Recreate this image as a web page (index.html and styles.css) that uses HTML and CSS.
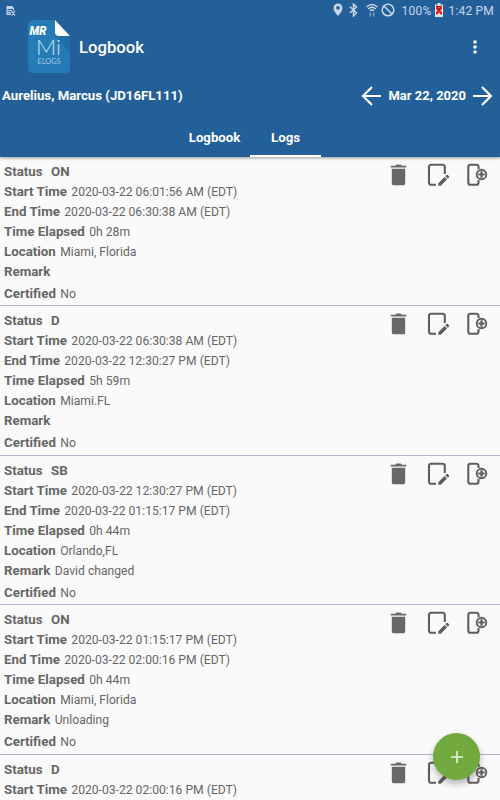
FILE: index.html
```
<!DOCTYPE html>
<html lang="en">
<head>
  <meta charset="UTF-8">
  <meta name="viewport" content="width=device-width, initial-scale=1.0">
  <title>Logbook</title>
  <link rel="stylesheet" href="styles.css">
</head>
<body>
  <!-- Shared icons -->
  <svg class="sprite" width="0" height="0">
    <symbol id="trash" viewBox="0 0 18 22">
      <path d="M.8 1.800h4.500l1-1.200h4.400l1 1.200h4.500v1.800H.8zM1.800 4.800h13.400v14.800q0 1.600-1.600 1.600H3.400q-1.600 0-1.600-1.600z" fill="#6b6767"/>
    </symbol>
    <symbol id="edit" viewBox="0 0 24 26">
      <path d="M9 21.800H4.300Q2 21.800 2 19.500V4Q2 1.700 4.300 1.700h11.200Q17.800 1.700 17.800 4v7" fill="none" stroke="#5e5e5e" stroke-width="2.100"/>
      <path d="M11.300 22.700v-2.500l6.200-6.200 2.500 2.500-6.200 6.200zM18.300 13.200l1.200-1.200q.6-.5 1.200 0l1.300 1.300q.5.600 0 1.200l-1.200 1.200z" fill="#5e5e5e"/>
    </symbol>
    <symbol id="insert" viewBox="0 0 22 26">
      <path d="M12.500 6V4Q12.500 1.700 10.200 1.700H4.500Q2.300 1.700 2.300 4v15.500q0 2.300 2.200 2.300h5.700q2.300 0 2.300-2.300V17" fill="none" stroke="#5e5e5e" stroke-width="2.100"/>
      <circle cx="15.500" cy="11.500" r="4.800" fill="#fafafa" stroke="#5e5e5e" stroke-width="1.900"/>
      <path d="M15.500 8.300v6.400M12.300 11.500h6.400" stroke="#5e5e5e" stroke-width="2.200"/>
    </symbol>
  </svg>

  <div class="screen">
    <header class="header">
      <div class="status-bar">
        <svg class="note-icon" width="10" height="11" viewBox="0 0 10 11">
          <path d="M.5 1h5.500l2 2v2.500H7V4H1.800v4.500H5V10H.5z" fill="#c3d3e5"/>
          <path d="M1 2.500h5M2 5.500h4M2 7.500h3M5.500 6l3.500 4.500M9 6l-3.500 4.500" stroke="#c3d3e5" stroke-width="1.200" fill="none"/>
        </svg>
        <div class="status-icons">
          <svg width="10" height="14" viewBox="0 0 10 14">
            <path d="M5 .5A4.500 4.500 0 0 0 .5 5C.5 8.300 5 13 5 13s4.500-4.700 4.500-8A4.500 4.500 0 0 0 5 .5z" fill="#c8d7e7"/>
            <circle cx="5" cy="4.900" r="1.800" fill="#235f98"/>
          </svg>
          <svg width="9" height="14" viewBox="0 0 9 14">
            <path d="M1 3.800l6.500 6L4.500 13V1l3 3-6.500 6" fill="none" stroke="#c8d7e7" stroke-width="1.500"/>
          </svg>
          <svg width="12" height="14" viewBox="0 0 12 14">
            <path d="M.6 4Q6-1 11.400 4M2.200 6Q6 2.500 9.800 6M4 7.800q2-1.600 4 0" fill="none" stroke="#c8d7e7" stroke-width="1.300"/>
            <path d="M4.300 9.500v4M7.700 9.500v4" stroke="#7d9fc2" stroke-width="1.500"/>
          </svg>
          <svg width="14" height="14" viewBox="0 0 14 14">
            <circle cx="7" cy="7" r="5.800" fill="none" stroke="#c8d7e7" stroke-width="1.500"/>
            <path d="M3 3l8 8" stroke="#c8d7e7" stroke-width="1.500"/>
          </svg>
          <span class="battery-text">100%</span>
          <svg width="8" height="14" viewBox="0 0 8 14">
            <path d="M0 1.500h2.500V0h3v1.500H8V14H0z" fill="#dce5ee"/>
            <path d="M1 2.500h1.500L4 5l2-2.500h1V6L5.300 7.500 7 9v2.500H5.500L4 9.500 2.500 11.500H1V9l1.500-1.500L1 6z" fill="#e02314"/>
            <path d="M2.500 3.500h3M3 6.500h2" stroke="#402020"/>
          </svg>
          <span class="clock">1:42 PM</span>
        </div>
      </div>

      <div class="toolbar">
        <svg class="logo" width="43" height="54" viewBox="0 0 43 54">
          <path d="M6 0h20l16 17v31q0 5-5 5H5q-5 0-5-5V6q0-6 6-6z" fill="#247bb6"/>
          <path d="M27 16h15v16z" fill="#216da7"/>
          <path d="M27 0v12q0 4 4 4h11z" fill="#fff"/>
          <text class="logo-brand" x="1.500" y="14.500" textLength="17" lengthAdjust="spacingAndGlyphs">MR</text>
          <text class="logo-name" x="8" y="34.500" textLength="25" lengthAdjust="spacingAndGlyphs">Mi</text>
          <text class="logo-sub" x="9.500" y="43.500" textLength="23" lengthAdjust="spacingAndGlyphs">ELOGS</text>
        </svg>
        <h1>Logbook</h1>
        <svg class="menu-icon" width="4" height="14" viewBox="0 0 4 14">
          <g fill="#fff"><circle cx="2" cy="2" r="1.800"/><circle cx="2" cy="7" r="1.800"/><circle cx="2" cy="12" r="1.800"/></g>
        </svg>
      </div>

      <div class="driver-row">
        <span class="driver">Aurelius, Marcus (JD16FL111)</span>
        <div class="date-picker">
          <svg width="20" height="20" viewBox="0 0 20 20"><path d="M20 10H2M11 1l-9 9 9 9" fill="none" stroke="#fff" stroke-width="2.200"/></svg>
          <span class="date">Mar 22, 2020</span>
          <svg width="20" height="20" viewBox="0 0 20 20"><path d="M0 10h18M9 1l9 9-9 9" fill="none" stroke="#fff" stroke-width="2.200"/></svg>
        </div>
      </div>

      <nav class="tabs">
        <span class="tab">Logbook</span>
        <span class="tab active">Logs</span>
      </nav>
    </header>

    <main class="logs">
      <section class="log">
        <div class="fields">
          <p class="status"><b>Status</b><b>ON</b></p>
          <p><b>Start Time</b><span>2020-03-22 06:01:56 AM (EDT)</span></p>
          <p><b>End Time</b><span>2020-03-22 06:30:38 AM (EDT)</span></p>
          <p><b>Time Elapsed</b><span>0h 28m</span></p>
          <p><b>Location</b><span>Miami, Florida</span></p>
          <p><b>Remark</b></p>
          <p class="certified"><b>Certified</b><span>No</span></p>
        </div>
        <div class="actions">
          <svg class="trash"><use href="#trash"/></svg>
          <svg class="edit"><use href="#edit"/></svg>
          <svg class="insert"><use href="#insert"/></svg>
        </div>
      </section>

      <section class="log">
        <div class="fields">
          <p class="status"><b>Status</b><b>D</b></p>
          <p><b>Start Time</b><span>2020-03-22 06:30:38 AM (EDT)</span></p>
          <p><b>End Time</b><span>2020-03-22 12:30:27 PM (EDT)</span></p>
          <p><b>Time Elapsed</b><span>5h 59m</span></p>
          <p><b>Location</b><span>Miami.FL</span></p>
          <p><b>Remark</b></p>
          <p class="certified"><b>Certified</b><span>No</span></p>
        </div>
        <div class="actions">
          <svg class="trash"><use href="#trash"/></svg>
          <svg class="edit"><use href="#edit"/></svg>
          <svg class="insert"><use href="#insert"/></svg>
        </div>
      </section>

      <section class="log">
        <div class="fields">
          <p class="status"><b>Status</b><b>SB</b></p>
          <p><b>Start Time</b><span>2020-03-22 12:30:27 PM (EDT)</span></p>
          <p><b>End Time</b><span>2020-03-22 01:15:17 PM (EDT)</span></p>
          <p><b>Time Elapsed</b><span>0h 44m</span></p>
          <p><b>Location</b><span>Orlando,FL</span></p>
          <p><b>Remark</b><span>David changed</span></p>
          <p class="certified"><b>Certified</b><span>No</span></p>
        </div>
        <div class="actions">
          <svg class="trash"><use href="#trash"/></svg>
          <svg class="edit"><use href="#edit"/></svg>
          <svg class="insert"><use href="#insert"/></svg>
        </div>
      </section>

      <section class="log">
        <div class="fields">
          <p class="status"><b>Status</b><b>ON</b></p>
          <p><b>Start Time</b><span>2020-03-22 01:15:17 PM (EDT)</span></p>
          <p><b>End Time</b><span>2020-03-22 02:00:16 PM (EDT)</span></p>
          <p><b>Time Elapsed</b><span>0h 44m</span></p>
          <p><b>Location</b><span>Miami, Florida</span></p>
          <p><b>Remark</b><span>Unloading</span></p>
          <p class="certified"><b>Certified</b><span>No</span></p>
        </div>
        <div class="actions">
          <svg class="trash"><use href="#trash"/></svg>
          <svg class="edit"><use href="#edit"/></svg>
          <svg class="insert"><use href="#insert"/></svg>
        </div>
      </section>

      <section class="log">
        <div class="fields">
          <p class="status"><b>Status</b><b>D</b></p>
          <p><b>Start Time</b><span>2020-03-22 02:00:16 PM (EDT)</span></p>
        </div>
        <div class="actions">
          <svg class="trash"><use href="#trash"/></svg>
          <svg class="edit"><use href="#edit"/></svg>
          <svg class="insert"><use href="#insert"/></svg>
        </div>
      </section>
    </main>

    <button class="add-button" type="button" aria-label="Add log">
      <svg width="12" height="12" viewBox="0 0 12 12"><path d="M6 0v12M0 6h12" stroke="#e9f6df" stroke-width="1.600"/></svg>
    </button>
  </div>
</body>
</html>
```
FILE: styles.css
```
* {
  box-sizing: border-box;
}

body {
  margin: 0;
  font-family: Roboto, sans-serif;
  background-color: #fafafa;
}

svg {
  display: block;
  flex-shrink: 0;
}

.sprite {
  position: absolute;
}

.screen {
  position: relative;
  width: 500px;
  height: 800px;
  overflow: hidden;
  display: flex;
  flex-direction: column;
}

.header {
  position: relative;
  height: 157px;
  flex-shrink: 0;
  background-color: #235f98;
  color: #fff;
  box-shadow: 0 1px 3px rgba(0, 0, 0, 0.4);
}

.status-bar {
  display: flex;
  justify-content: space-between;
  align-items: center;
  height: 20px;
  padding: 0 6px 0 6px;
  color: #c8d7e7;
  font-size: 12px;
}

.status-icons {
  display: flex;
  align-items: center;
}

.status-icons svg:nth-child(2) {
  margin-left: 6px;
}

.status-icons svg:nth-child(3) {
  margin-left: 8px;
}

.status-icons svg:nth-child(4) {
  margin-left: 3px;
}

.battery-text {
  margin-left: 7px;
  margin-right: 4px;
  letter-spacing: 0.2px;
  line-height: 14px;
  padding-top: 1px;
}

.clock {
  margin-left: 5px;
  letter-spacing: 0.2px;
  line-height: 14px;
  padding-top: 1px;
}

.toolbar {
  display: flex;
  align-items: center;
  height: 54px;
  padding: 0 23px 0 28px;
}

.toolbar h1 {
  margin: 0 0 0 8px;
  flex: 1;
  font-size: 16.7px;
  font-weight: 500;
}

.logo-brand {
  font: italic 900 12.5px Roboto, sans-serif;
  fill: #fff;
}

.logo-name {
  font: 300 21px Lato, sans-serif;
  fill: #cfe4f2;
}

.logo-sub {
  font: 400 8px Lato, sans-serif;
  fill: #a3c9e2;
}

.driver-row {
  display: flex;
  justify-content: space-between;
  align-items: center;
  height: 43px;
  padding: 0 7px 0 2px;
  font-size: 13.2px;
  font-weight: 700;
}

.date-picker {
  display: flex;
  align-items: center;
  gap: 7px;
}

.date {
  font-size: 13px;
}

.tabs {
  display: flex;
  justify-content: center;
  height: 40px;
}

.tab {
  width: 71px;
  padding-top: 12px;
  line-height: 18px;
  text-align: center;
  font-size: 13.2px;
  font-weight: 700;
}

.active {
  border-bottom: 2px solid #fff;
}

.log {
  display: flex;
  justify-content: space-between;
  height: 149.4px;
  padding: 4px 12px 0 4px;
  border-bottom: 1px solid #b5b0cb;
  color: #666;
}

.fields {
  padding-top: 1px;
}

.fields p {
  display: flex;
  align-items: baseline;
  gap: 4.4px;
  height: 20px;
  margin: 0;
  line-height: 20px;
  font-size: 12.15px;
  white-space: nowrap;
}

.fields b {
  font-size: 13.3px;
  font-weight: 700;
}

.fields .status {
  gap: 8.5px;
}

.fields .certified {
  margin-top: 2px;
}

.actions {
  display: flex;
  align-items: flex-start;
}

.trash {
  width: 18px;
  height: 22px;
  margin-top: 3px;
}

.edit {
  width: 24px;
  height: 26px;
  margin: 2px 0 0 19px;
}

.insert {
  width: 22px;
  height: 26px;
  margin: 2px 0 0 15px;
}

.add-button {
  position: absolute;
  left: 433px;
  top: 733px;
  display: flex;
  align-items: center;
  justify-content: center;
  width: 47px;
  height: 47px;
  padding: 0;
  border: none;
  border-radius: 50%;
  background-color: #73aa40;
  box-shadow: 0 4px 7px rgba(0, 0, 0, 0.28);
}
```
